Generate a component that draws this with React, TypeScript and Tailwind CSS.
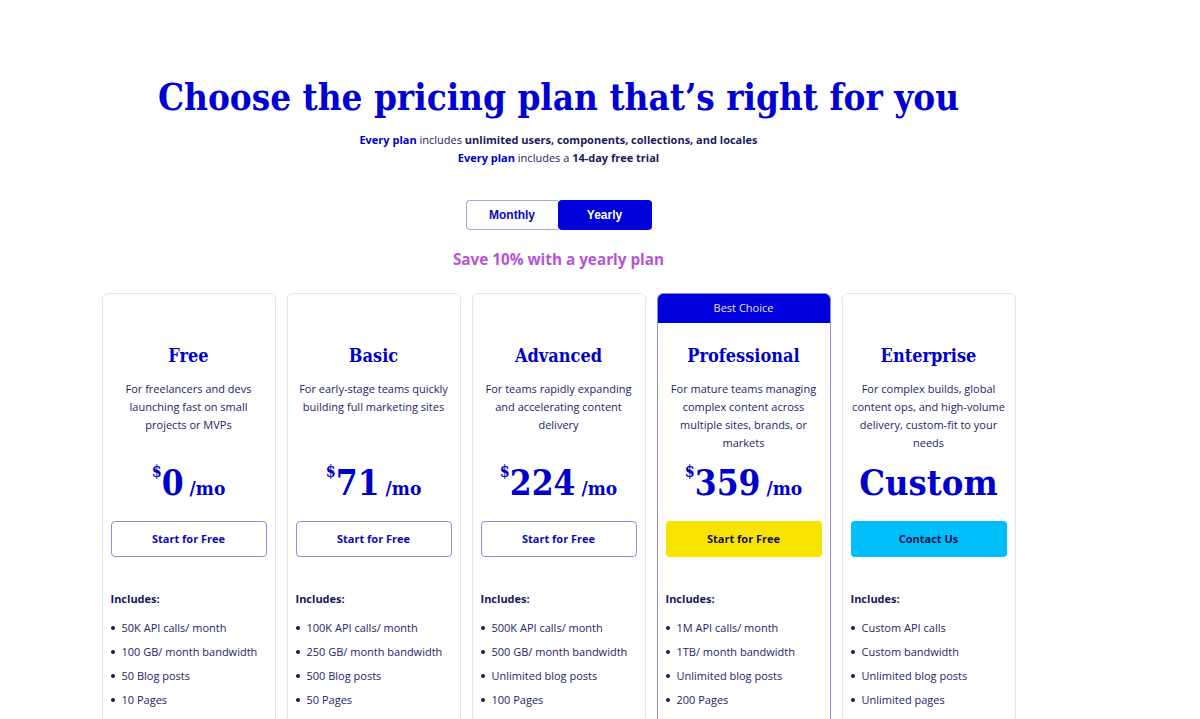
import React from "react";

const serif = "font-['DejaVu_Serif_Condensed','DejaVu_Serif',serif]";
const sans = "font-['Open_Sans','Noto_Sans',sans-serif]";

type Plan = {
  name: string;
  desc: string[];
  price?: string;
  custom?: boolean;
  button: string;
  btn: "outline" | "yellow" | "cyan";
  best?: boolean;
  items: string[];
};

const plans: Plan[] = [
  {
    name: "Free",
    desc: ["For freelancers and devs", "launching fast on small", "projects or MVPs"],
    price: "0",
    button: "Start for Free",
    btn: "outline",
    items: ["50K API calls/ month", "100 GB/ month bandwidth", "50 Blog posts", "10 Pages"],
  },
  {
    name: "Basic",
    desc: ["For early-stage teams quickly", "building full marketing sites"],
    price: "71",
    button: "Start for Free",
    btn: "outline",
    items: ["100K API calls/ month", "250 GB/ month bandwidth", "500 Blog posts", "50 Pages"],
  },
  {
    name: "Advanced",
    desc: ["For teams rapidly expanding", "and accelerating content", "delivery"],
    price: "224",
    button: "Start for Free",
    btn: "outline",
    items: ["500K API calls/ month", "500 GB/ month bandwidth", "Unlimited blog posts", "100 Pages"],
  },
  {
    name: "Professional",
    desc: ["For mature teams managing", "complex content across", "multiple sites, brands, or", "markets"],
    price: "359",
    button: "Start for Free",
    btn: "yellow",
    best: true,
    items: ["1M API calls/ month", "1TB/ month bandwidth", "Unlimited blog posts", "200 Pages"],
  },
  {
    name: "Enterprise",
    desc: ["For complex builds, global", "content ops, and high-volume", "delivery, custom-fit to your", "needs"],
    custom: true,
    button: "Contact Us",
    btn: "cyan",
    items: ["Custom API calls", "Custom bandwidth", "Unlimited blog posts", "Unlimited pages"],
  },
];

function Card({ p }: { p: Plan }) {
  return (
    <div
      className={`w-[174px] h-[440px] shrink-0 flex flex-col rounded-t-[6px] border ${
        p.best ? "border-[#8a8ae6]" : "border-[#e6e6ea]"
      } bg-white overflow-hidden`}
    >
      {p.best ? (
        <div className={`h-[29px] bg-[#0000dd] flex items-center justify-center text-[11px] text-[#ece2bd] ${sans}`}>
          Best Choice
        </div>
      ) : (
        <div className="h-[29px]" />
      )}
      <div className={`mt-[19px] text-center text-[18px] leading-[28px] font-bold text-[#0000cc] ${serif}`}>
        {p.name}
      </div>
      <div className={`mt-[10px] h-[72px] text-center text-[11px] leading-[18px] text-[#24246a] ${sans}`}>
        {p.desc.map((l) => (
          <div key={l} className="whitespace-nowrap">
            {l}
          </div>
        ))}
      </div>
      <div className={`mt-[5px] h-[48px] flex items-end justify-center text-[#0000cc] font-bold ${serif}`}>
        {p.custom ? (
          <span className="text-[36px] leading-[48px] -mb-[1px]">Custom</span>
        ) : (
          <span className="flex items-baseline leading-none pb-[5px]">
            <span className="text-[16px] self-start -mt-[1px]">$</span>
            <span className="text-[35px]">{p.price}</span>
            <span className="text-[19px] ml-[6px]">/mo</span>
          </span>
        )}
      </div>
      <div className="mt-[16px] px-[8px]">
        <div
          className={`h-[36px] rounded-[4px] flex items-center justify-center text-[11px] font-bold ${sans} ${
            p.btn === "outline"
              ? "border border-[#8c8ce6] text-[#0a0ab4]"
              : p.btn === "yellow"
              ? "bg-[#f9e400] text-[#12124a]"
              : "bg-[#00befa] text-[#12124a]"
          }`}
        >
          {p.button}
        </div>
      </div>
      <div className={`mt-[33px] px-[8px] text-[11px] leading-[18px] font-bold text-[#16165a] ${sans}`}>Includes:</div>
      <ul className={`mt-[11px] px-[8px] flex flex-col gap-[6px] text-[11px] leading-[18px] text-[#24246a] ${sans}`}>
        {p.items.map((i) => (
          <li key={i} className="flex items-center whitespace-nowrap">
            <span className="shrink-0 w-[4px] h-[4px] rounded-full bg-[#16165a] mr-[7px]" />
            {i}
          </li>
        ))}
      </ul>
    </div>
  );
}

export default function App() {
  return (
    <div className="w-[1200px] h-[719px] overflow-hidden bg-white">
      <div className="w-[1117px] flex flex-col items-center pt-[74px]">
        <h1 className={`text-[36.5px] leading-[48px] font-bold text-[#0000d4] whitespace-nowrap ${serif}`}>
          Choose the pricing plan that’s right for you
        </h1>
        <div className={`mt-[9px] text-center text-[11px] leading-[18px] text-[#1a1a5c] ${sans}`}>
          <div>
            <span className="font-bold text-[#0000cc]">Every plan</span> includes{" "}
            <span className="font-bold">unlimited users, components, collections, and locales</span>
          </div>
          <div>
            <span className="font-bold text-[#0000cc]">Every plan</span> includes a{" "}
            <span className="font-bold">14-day free trial</span>
          </div>
        </div>
        <div className="mt-[33px] flex h-[30px] font-['Liberation_Sans',Arial,sans-serif] text-[12px] font-bold">
          <div className="w-[92px] flex items-center justify-center rounded-l-[4px] border border-r-0 border-[#a4a4ea] text-[#0a0ab4]">
            Monthly
          </div>
          <div className="w-[94px] flex items-center justify-center rounded-[4px] bg-[#0000d8] text-white">
            Yearly
          </div>
        </div>
        <div className={`mt-[17px] text-[15.3px] leading-[24px] font-bold text-[#b555d6] ${sans}`}>
          Save 10% with a yearly plan
        </div>
        <div className="mt-[22px] flex gap-[11px]">
          {plans.map((p) => (
            <Card key={p.name} p={p} />
          ))}
        </div>
      </div>
    </div>
  );
}
